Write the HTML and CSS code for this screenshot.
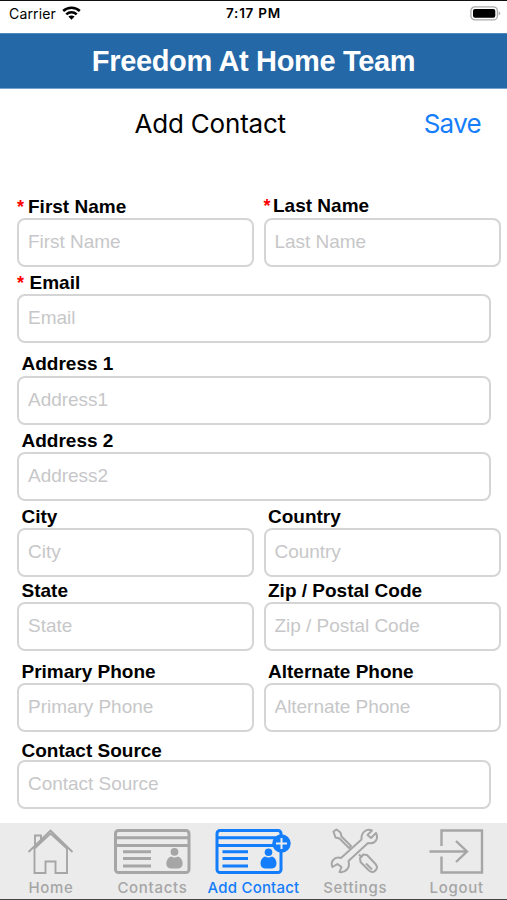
FILE: index.html
```html
<!DOCTYPE html>
<html lang="en">
<head>
<meta charset="utf-8">
<title>Add Contact</title>
<link rel="stylesheet" href="styles.css">
</head>
<body>
<div class="screen">
  <header class="status">
    <div class="carrier"><span>Carrier</span>
      <svg width="19" height="14" viewBox="0 0 19 14" fill="none" stroke="#000" stroke-width="2.5"><path d="M1.2 5C5.7.6 13.3.6 17.8 5M4.3 8.3c2.9-2.8 7.5-2.8 10.4 0"/><path d="M9.5 13.7 6.4 10.6c1.7-1.6 4.5-1.6 6.2 0z" fill="#000" stroke="none"/></svg>
    </div>
    <span class="time">7:17 PM</span>
    <svg class="battery" width="31" height="15" viewBox="0 0 31 15"><rect x=".9" y=".9" width="26.5" height="13" rx="4" fill="#fff" stroke="#aaa" stroke-width="1.3"/><rect x="3" y="3" width="22.3" height="8.8" rx="2" fill="#000"/><path d="M28.7 5.2q3 2.2 0 4.4z" fill="#aaa"/></svg>
  </header>
  <h1 class="brand"><span>Freedom At Home Team</span></h1>
  <div class="titlebar"><h2>Add Contact</h2><a class="save">Save</a></div>
  <form class="form">
    <div class="row pair first">
      <label class="field"><span class="label req"><b class="star">*</b>First Name</span><input placeholder="First Name"></label>
      <label class="field"><span class="label req raised"><b class="star">*</b>Last Name</span><input placeholder="Last Name"></label>
    </div>
    <div class="row email"><label class="field"><span class="label req"><b class="star">*</b>Email</span><input placeholder="Email"></label></div>
    <div class="row address1"><label class="field"><span class="label">Address 1</span><input placeholder="Address1"></label></div>
    <div class="row address2"><label class="field"><span class="label">Address 2</span><input placeholder="Address2"></label></div>
    <div class="row pair city">
      <label class="field"><span class="label">City</span><input placeholder="City"></label>
      <label class="field"><span class="label">Country</span><input placeholder="Country"></label>
    </div>
    <div class="row pair state">
      <label class="field"><span class="label">State</span><input placeholder="State"></label>
      <label class="field"><span class="label">Zip / Postal Code</span><input placeholder="Zip / Postal Code"></label>
    </div>
    <div class="row pair phone">
      <label class="field"><span class="label">Primary Phone</span><input placeholder="Primary Phone"></label>
      <label class="field"><span class="label">Alternate Phone</span><input placeholder="Alternate Phone"></label>
    </div>
    <div class="row source"><label class="field"><span class="label">Contact Source</span><input placeholder="Contact Source"></label></div>
  </form>
  <nav class="tabs">
    <a class="tab"><svg width="80" height="56" viewBox="0 0 80 56" fill="none" stroke="currentColor" stroke-width="1.900"><path d="M17.500 29 39.500 7.500 61.500 29M24 22v-9.500h6v4M23.500 25.500v24.500H34.500V38.500h10V50h11.500V25.500L39.500 10.500z"/></svg><span>Home</span></a>
    <a class="tab"><svg width="80" height="56" viewBox="0 0 80 56" fill="none" stroke="currentColor" stroke-width="3"><rect x="3.500" y="7.500" width="73.500" height="42" rx="3"/><path d="M3.500 14.800h73.500M3.500 22.500h73.500M11 28.700h28M11 35.500h28M11 43h28" /><circle cx="62.500" cy="28.800" r="3.900" fill="currentColor" stroke="none"/><path d="M59 33.500q3.500 2 7 0c6 2 6.500 12 0 12h-7c-6.500 0-6-10 0-12z" fill="currentColor" stroke="none"/></svg><span>Contacts</span></a>
    <a class="tab active"><svg width="80" height="56" viewBox="0 0 80 56" fill="none" stroke="currentColor" stroke-width="3"><rect x="4" y="7.500" width="64" height="42" rx="3"/><path d="M4 14.800h64M4 22.500h64M9.500 28.700H35M9.500 35.500H35M9.500 43H35"/><circle cx="55.500" cy="29.300" r="3.800" fill="currentColor" stroke="none"/><path d="M52 33.500q3.500 2 7 0c6 2 6 12 0 12h-7c-6 0-6-10 0-12z" fill="currentColor" stroke="none"/><circle cx="68.500" cy="20.500" r="9.200" fill="currentColor" stroke="none"/><path d="M68.500 15v11M63 20.500h11" stroke="#eee" stroke-width="2"/></svg><span>Add Contact</span></a>
    <a class="tab"><svg width="80" height="56" viewBox="0 0 80 56" fill="none" stroke="currentColor" stroke-width="2" stroke-linejoin="round"><path d="m18.500 8.500 3-2 4 3 1 4 9.500 9.500-2 2-9.500-9.500-4-1z"/><path d="M44 31.500 46.500 34l1.500-2.500 4 .5 8.500 9c4 4.500-2 10.500-6.500 6.500l-8.500-8.500-.5-4 1.500-1-2.500-2.500M51 40.500l6 6"/><path d="M57 7.500c-5-2-11 1-10.500 9L26 35c-7-2-11 4-8.500 9l5-3 4 3-2 5c6 1 11-4 9-11L53 20c7 1.500 11-4 8-10l-5 5-3.500-3z"/></svg><span>Settings</span></a>
    <a class="tab"><svg width="80" height="56" viewBox="0 0 80 56" fill="none" stroke="currentColor" stroke-width="2.400"><path d="M25.500 23V7.500H66v42H25.500V33.500M13.500 28.500h37M40 18l11 10.500L40 39"/></svg><span>Logout</span></a>
  </nav>
</div>
</body>
</html>
```
FILE: styles.css
```css
* { box-sizing: border-box; }
body { margin: 0; background: #fff; font-family: "Liberation Sans", Arial, sans-serif; }
.screen { height: 900px; display: flex; flex-direction: column; border-top: 1px solid #111; border-bottom: 1px solid #444; overflow: hidden; }
.status { height: 32px; flex: none; display: grid; grid-template-columns: 1fr auto 1fr; align-items: start; padding: 4px 7px 0 9px; font: 14px/17px Inter, sans-serif; }
.carrier { display: flex; gap: 6px; letter-spacing: .15px; }
.carrier svg { margin-top: 1px; }
.time { margin-left: -2px; font-weight: 600; font-size: 13.5px; letter-spacing: .75px; }
.battery { justify-self: end; margin: 1px -1px 0 0; }
.brand { height: 56px; flex: none; margin: 0; display: flex; align-items: center; justify-content: center; background: #2568a7; border-top: 1px solid #4e8abd; border-bottom: 1px solid #75a1cc; color: #fff; font-size: 29px; line-height: 34px; letter-spacing: -.35px; }
.titlebar { height: 68px; flex: none; display: flex; justify-content: space-between; padding: 0 26px 0 134.500px; font: 26px/70px Inter, sans-serif; }
.titlebar h2 { margin: 0; font: inherit; letter-spacing: -.2px; }
.save { color: #167efb; letter-spacing: -.7px; }
.form { flex: 1; margin: 0; padding: 36px 16px 0 17px; }
.row { display: grid; grid-template-columns: 474px; align-items: end; }
.pair { grid-template-columns: 237px 237px; column-gap: 9.500px; }
.field { display: flex; flex-direction: column; justify-content: flex-end; }
.label { padding: 0 0 1px 4.500px; font-weight: 700; font-size: 19px; line-height: 20px; white-space: nowrap; }
.req { display: flex; padding-left: 0; }
.star { width: 11px; color: #f00; font-size: 18px; line-height: 21px; height: 20px; }
.email .star { width: 12.500px; }
.raised { padding-bottom: 2px; }
.raised .star { width: 9.500px; }
input { display: block; width: 100%; height: 49px; margin: 0; padding: 0 9px 1px; border: 2px solid #d5d5d5; border-radius: 8px; background: #fff; outline: 0; font: 19px "Liberation Sans", Arial, sans-serif; }
input::placeholder { color: #c7c7c9; opacity: 1; letter-spacing: -.03px; }
.first { height: 74px; }
.email { height: 76px; }
.address1 { height: 82px; }
.address1 .label { padding-bottom: 2px; }
.address2, .city { height: 76px; }
.state { height: 74px; }
.phone { height: 81px; }
.source { height: 77px; }
.source .label { padding-bottom: 0; margin-bottom: -1px; }
.tabs { height: 76px; flex: none; display: grid; grid-template-columns: repeat(5, 1fr); background: #ebebeb; color: #a6a6a6; }
.tab { display: flex; flex-direction: column; align-items: center; font: 500 15px/17px Inter, sans-serif; white-space: nowrap; }
.tab svg { flex: none; display: block; }
.tab span { letter-spacing: .7px; margin-right: -.7px; }
.tab.active span { letter-spacing: .2px; margin-right: 0; }
.active { color: #137dfb; }
```
